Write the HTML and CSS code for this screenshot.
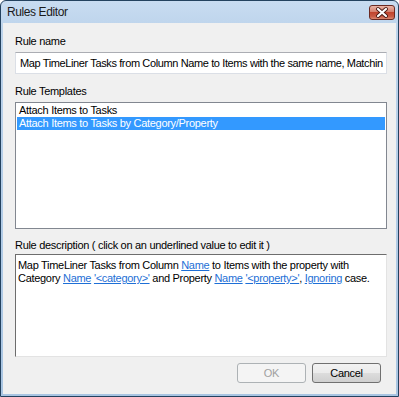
FILE: index.html
```html
<!DOCTYPE html>
<html lang="en">
  <head>
    <meta charset="UTF-8" />
    <title>Rules Editor</title>
    <link rel="stylesheet" href="styles.css">
  </head>
  <body>
    <div class="window">
      <div class="titlebar">
        <span class="title">Rules Editor</span>
        <div class="close-btn">
          <svg width="24" height="13" viewBox="0 0 24 13">
            <path d="M8 3 L16 10 M16 3 L8 10" stroke="#4a1a14" stroke-width="4" stroke-linecap="round" />
            <path d="M8 3 L16 10 M16 3 L8 10" stroke="#ffffff" stroke-width="2.2" stroke-linecap="round" />
          </svg>
        </div>
      </div>
      <div class="client">
        <div class="label">Rule name</div>
        <div class="textbox">Map TimeLiner Tasks from Column Name to Items with the same name, Matchin</div>

        <div class="label gap-templates">Rule Templates</div>
        <div class="listbox">
          <div class="item">Attach Items to Tasks</div>
          <div class="item selected">Attach Items to Tasks by Category/Property</div>
        </div>

        <div class="label gap-desc">Rule description ( click on an underlined value to edit it )</div>
        <div class="descbox">
          Map TimeLiner Tasks from Column <a href="#">Name</a> to Items with the property with<br>
          Category <a href="#">Name</a> <a href="#">'&lt;category&gt;'</a> and Property <a href="#">Name</a> <a href="#">'&lt;property&gt;'</a>, <a href="#">Ignoring</a> case.
        </div>

        <div class="form-buttons">
          <button class="btn" disabled>OK</button>
          <button class="btn">Cancel</button>
        </div>
      </div>
    </div>
  </body>
</html>
```

FILE: styles.css
```css
* {
  margin: 0;
  padding: 0;
  box-sizing: border-box;
}
body {
  background-color: #ffffff;
  font-family: "Liberation Sans", Arial, sans-serif;
  font-size: 11px;
  letter-spacing: -0.3px;
  color: #000000;
}
.window {
  width: 399px;
  height: 397px;
  border: 1px solid #24425f;
  border-radius: 6px 6px 0 0;
  background: linear-gradient(#c8dcf1, #bcd3eb 30px, #a9c5e2);
  display: flex;
  flex-direction: column;
  overflow: hidden;
}
.titlebar {
  height: 22px;
  display: flex;
  align-items: flex-start;
  justify-content: space-between;
  padding: 0 3px 0 6px;
}
.title {
  font-size: 12px;
  letter-spacing: -0.4px;
  line-height: 22px;
  color: #1a1a1a;
}
.close-btn {
  margin-top: 4px;
  width: 26px;
  height: 15px;
  border: 1px solid #6b2a22;
  border-radius: 3px;
  background: linear-gradient(#eab4a6, #d5806e 45%, #c1452f 50%, #c95a44 80%, #dc8a72);
  display: flex;
  align-items: center;
  justify-content: center;
}
.client {
  flex: 1;
  margin: 0 2px 2px 2px;
  background-color: #f0f0f0;
  padding: 12px 9px 0 12px;
  display: flex;
  flex-direction: column;
}
.label {
  line-height: 13px;
  height: 13px;
  white-space: nowrap;
}
.textbox {
  margin-top: 4px;
  height: 22px;
  background-color: #fff;
  border: 1px solid #dbdfe6;
  border-top-color: #abadb3;
  padding: 0 0 0 4px;
  line-height: 20px;
  letter-spacing: -0.38px;
  white-space: nowrap;
  overflow: hidden;
}
.gap-templates {
  margin-top: 11px;
}
.listbox {
  margin-top: 4px;
  height: 127px;
  background-color: #fff;
  border: 1px solid #828790;
  padding: 1px;
}
.item {
  height: 13px;
  line-height: 13px;
  padding-left: 2px;
  white-space: nowrap;
}
.item.selected {
  background-color: #3399ff;
  color: #fff;
}
.gap-desc {
  margin-top: 10px;
}
.descbox {
  margin-top: 2px;
  height: 103px;
  background-color: #fff;
  border: 1px solid #e3e3e3;
  border-top-color: #6d6d6d;
  border-left-color: #6d6d6d;
  padding: 4px 2px;
  line-height: 13px;
  white-space: nowrap;
}
.descbox a {
  color: #1e6fd6;
  text-decoration: underline;
}
.form-buttons {
  margin-top: 6px;
  display: flex;
  justify-content: flex-end;
  gap: 6px;
  padding-right: 6px;
}
.btn {
  width: 69px;
  height: 20px;
  font-family: inherit;
  font-size: 11px;
  letter-spacing: -0.3px;
  border: 1px solid #707070;
  border-radius: 3px;
  background: linear-gradient(#f2f2f2, #ebebeb 50%, #dddddd 50%, #cfcfcf);
  color: #000;
}
.btn:disabled {
  border-color: #adb2b5;
  background: #f4f4f4;
  color: #a0a0a0;
}
```
